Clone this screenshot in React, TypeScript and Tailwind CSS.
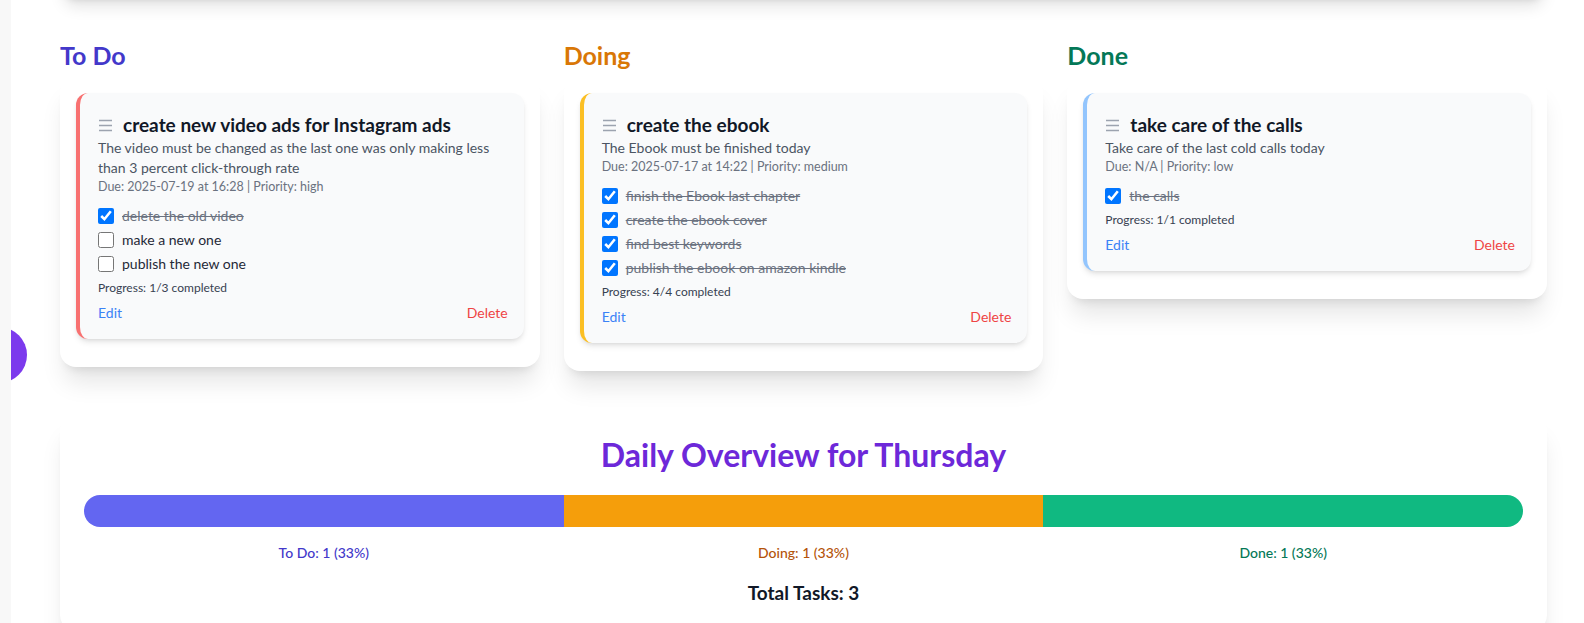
import React from "react";

type Sub = { text: string; done: boolean };
type Task = { title: string; desc: string; due: string; priority: string; subs: Sub[] };
type Column = { name: string; heading: string; border: string; tasks: Task[] };

const columns: Column[] = [
  {
    name: "To Do",
    heading: "text-[#4338ca]",
    border: "border-[#f87171]",
    tasks: [
      {
        title: "create new video ads for Instagram ads",
        desc: "The video must be changed as the last one was only making less than 3 percent click-through rate",
        due: "2025-07-19 at 16:28",
        priority: "high",
        subs: [
          { text: "delete the old video", done: true },
          { text: "make a new one", done: false },
          { text: "publish the new one", done: false },
        ],
      },
    ],
  },
  {
    name: "Doing",
    heading: "text-[#d97706]",
    border: "border-[#fbbf24]",
    tasks: [
      {
        title: "create the ebook",
        desc: "The Ebook must be finished today",
        due: "2025-07-17 at 14:22",
        priority: "medium",
        subs: [
          { text: "finish the Ebook last chapter", done: true },
          { text: "create the ebook cover", done: true },
          { text: "find best keywords", done: true },
          { text: "publish the ebook on amazon kindle", done: true },
        ],
      },
    ],
  },
  {
    name: "Done",
    heading: "text-[#047857]",
    border: "border-[#93c5fd]",
    tasks: [
      {
        title: "take care of the calls",
        desc: "Take care of the last cold calls today",
        due: "N/A",
        priority: "low",
        subs: [{ text: "the calls", done: true }],
      },
    ],
  },
];

function DragHandle() {
  return (
    <svg width="15" height="15" viewBox="0 0 15 15" className="mr-2.5 shrink-0" fill="none">
      <path d="M1 2.5h13M1 7.5h13M1 12.5h13" stroke="#9ca3af" strokeWidth="1.4" />
    </svg>
  );
}

function TaskCard({ task, border }: { task: Task; border: string }) {
  const done = task.subs.filter(s => s.done).length;
  return (
    <div className={`bg-[#f9fafb] rounded-xl border-l-4 ${border} shadow-md pl-[18px] pr-4 pt-5 pb-4 mb-3`}>
      <div className="flex items-center h-6">
        <DragHandle />
        <h3 className="text-[19px] font-bold text-[#111827] leading-6">{task.title}</h3>
      </div>
      <p className="mt-px text-sm text-[#4b5563] leading-5">{task.desc}</p>
      <p className="text-[12.5px] text-[#6b7280] leading-4 mt-px">
        Due: {task.due} | Priority: {task.priority}
      </p>
      <div className="mt-[11px] space-y-1">
        {task.subs.map(s => (
          <label key={s.text} className="flex items-center gap-2 h-5 text-sm">
            <input type="checkbox" defaultChecked={s.done} className="w-4 h-4 m-0 accent-[#0075ff]" />
            <span className={s.done ? "line-through text-[#6b7280]" : "text-[#1f2937]"}>{s.text}</span>
          </label>
        ))}
      </div>
      <p className="mt-1.5 text-xs text-[#374151] leading-4">
        Progress: {done}/{task.subs.length} completed
      </p>
      <div className="mt-[7px] flex justify-between text-sm leading-5">
        <button className="text-[#3b82f6]">Edit</button>
        <button className="text-[#ef4444]">Delete</button>
      </div>
    </div>
  );
}

export default function App() {
  const total = columns.reduce((n, c) => n + c.tasks.length, 0);
  const pct = (n: number) => Math.round((n / total) * 100);

  return (
    <div className="flex h-screen overflow-hidden bg-white" style={{ fontFamily: "Lato, 'Noto Sans', sans-serif" }}>
      <div className="w-[11px] shrink-0 bg-[#f8f8f8]" />
      <main className="relative flex-1 overflow-hidden">
        <button className="absolute left-[-40px] top-[327px] w-14 h-14 rounded-full bg-[#7c3aed]" />

        <div className="w-[1487px] ml-[49px]">
          <div className="h-10 -mt-10 bg-white rounded-2xl shadow-lg" />

          <div className="mt-[39px] grid grid-cols-3 gap-6 items-start">
            {columns.map(col => (
              <section key={col.name}>
                <h2 className={`text-[25px] font-bold leading-8 mb-1.5 ${col.heading}`}>{col.name}</h2>
                <div className="bg-white rounded-2xl shadow-xl p-4">
                  {col.tasks.map(t => (
                    <TaskCard key={t.title} task={t} border={col.border} />
                  ))}
                </div>
              </section>
            ))}
          </div>

          <div className="mt-[44px] bg-white rounded-2xl shadow-xl p-6">
            <h2 className="text-[32px] font-bold text-center text-[#6d28d9] leading-9 -mt-0.5">Daily Overview for Thursday</h2>
            <div className="mt-[22px] flex h-8 rounded-full overflow-hidden">
              <div className="bg-[#6366f1]" style={{ width: `${100 / 3}%` }} />
              <div className="bg-[#f59e0b]" style={{ width: `${100 / 3}%` }} />
              <div className="bg-[#10b981]" style={{ width: `${100 / 3}%` }} />
            </div>
            <div className="mt-4 grid grid-cols-3 text-center text-sm font-medium leading-5">
              <span className="text-[#4338ca]">To Do: 1 ({pct(1)}%)</span>
              <span className="text-[#b45309]">Doing: 1 ({pct(1)}%)</span>
              <span className="text-[#047857]">Done: 1 ({pct(1)}%)</span>
            </div>
            <p className="mt-4 text-center text-[19px] font-bold text-[#111827] leading-7">Total Tasks: {total}</p>
          </div>
        </div>
      </main>
    </div>
  );
}
